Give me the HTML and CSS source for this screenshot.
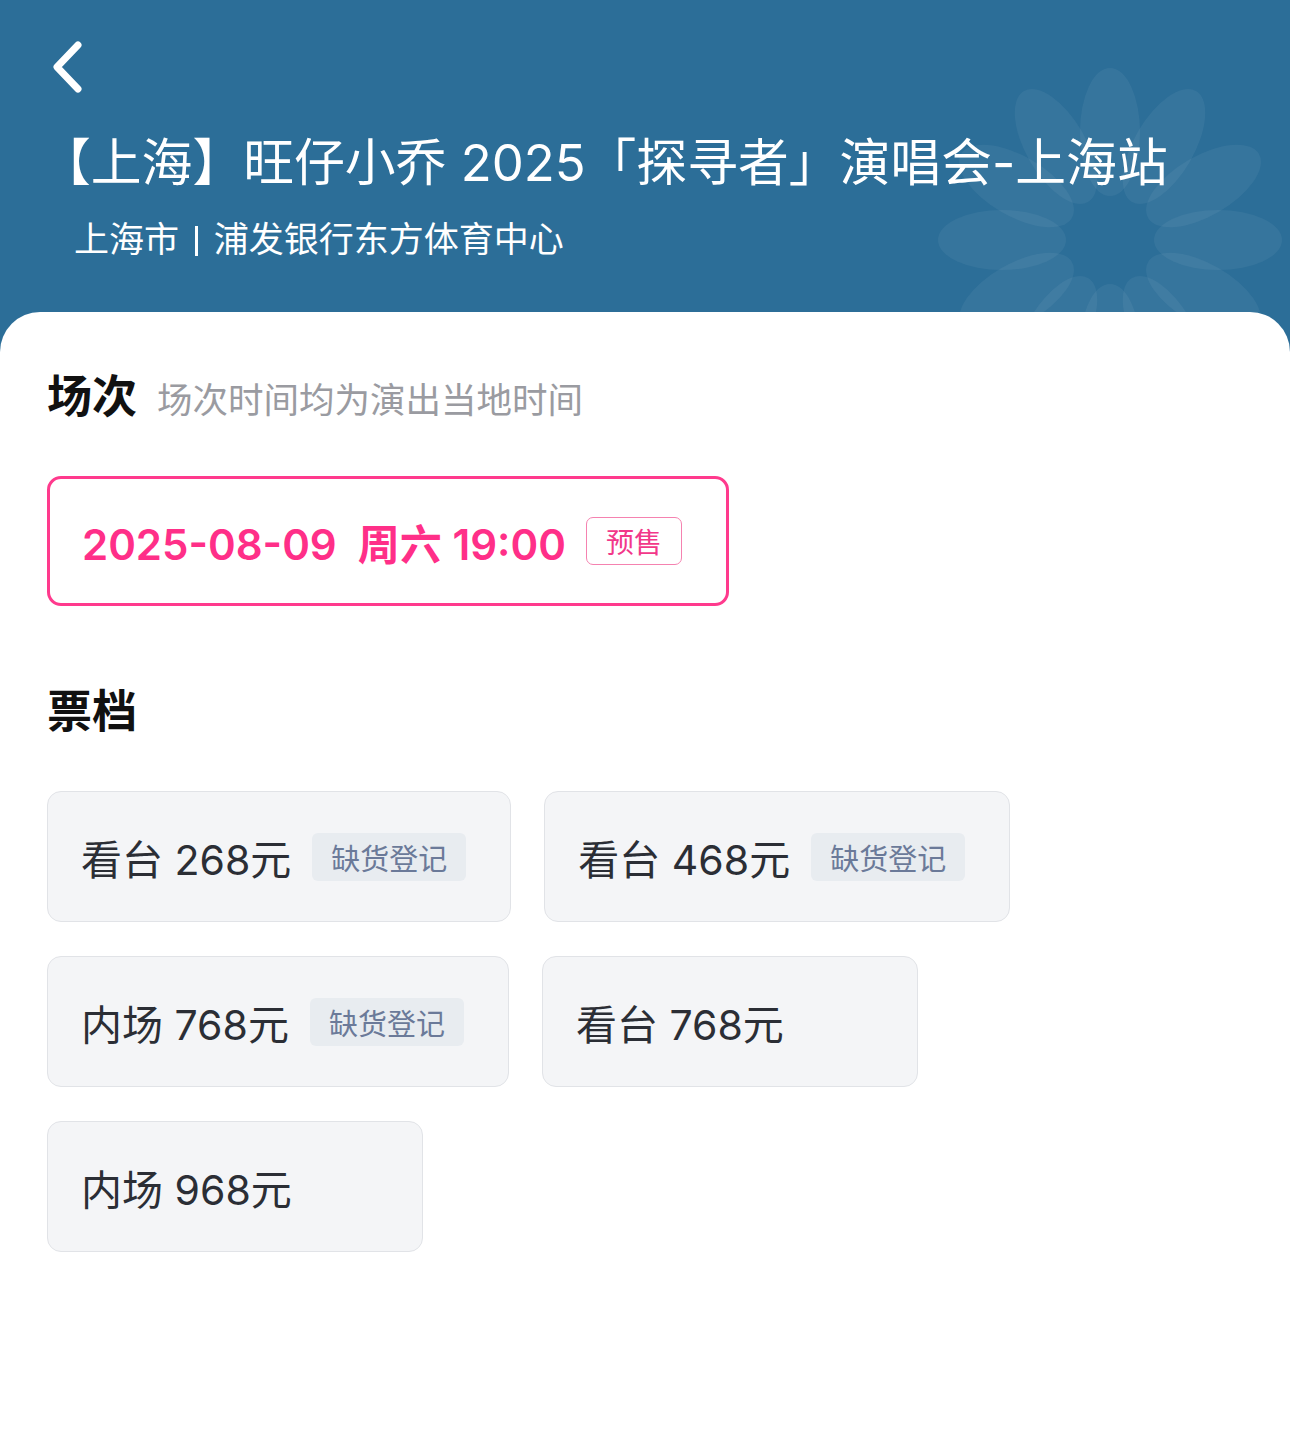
FILE: index.html
```html
<!DOCTYPE html>
<html lang="zh-CN">
<head>
<meta charset="utf-8">
<title>旺仔小乔 2025「探寻者」演唱会-上海站</title>
<link rel="stylesheet" href="styles.css">
</head>
<body>
<div class="page">
  <header class="hero">
    <svg class="watermark" width="360" height="360" viewBox="-180 -180 360 360" aria-hidden="true">
      <g fill="#ffffff" fill-opacity="0.05">
        <ellipse cx="0" cy="-108" rx="30" ry="64" transform="rotate(0)"/>
        <ellipse cx="0" cy="-108" rx="30" ry="64" transform="rotate(30)"/>
        <ellipse cx="0" cy="-108" rx="30" ry="64" transform="rotate(60)"/>
        <ellipse cx="0" cy="-108" rx="30" ry="64" transform="rotate(90)"/>
        <ellipse cx="0" cy="-108" rx="30" ry="64" transform="rotate(120)"/>
        <ellipse cx="0" cy="-108" rx="30" ry="64" transform="rotate(150)"/>
        <ellipse cx="0" cy="-108" rx="30" ry="64" transform="rotate(180)"/>
        <ellipse cx="0" cy="-108" rx="30" ry="64" transform="rotate(210)"/>
        <ellipse cx="0" cy="-108" rx="30" ry="64" transform="rotate(240)"/>
        <ellipse cx="0" cy="-108" rx="30" ry="64" transform="rotate(270)"/>
        <ellipse cx="0" cy="-108" rx="30" ry="64" transform="rotate(300)"/>
        <ellipse cx="0" cy="-108" rx="30" ry="64" transform="rotate(330)"/>
      </g>
    </svg>
    <svg class="back" width="36" height="58" viewBox="0 0 36 58" aria-label="返回">
      <path d="M28 7 L7 29 L28 51" fill="none" stroke="#ffffff" stroke-width="7" stroke-linecap="round" stroke-linejoin="round"/>
    </svg>
    <h1 class="title">【上海】旺仔小乔 2025「探寻者」演唱会-上海站</h1>
    <p class="venue">上海市 <span class="sep"></span> 浦发银行东方体育中心</p>
  </header>

  <main class="sheet">
    <section class="section">
      <div class="section-head">
        <h2 class="section-title">场次</h2>
        <span class="section-note">场次时间均为演出当地时间</span>
      </div>
      <div class="session">
        <span class="session-time">2025-08-09  周六 19:00</span>
        <span class="presale">预售</span>
      </div>
    </section>

    <section class="section section-tickets">
      <div class="section-head">
        <h2 class="section-title">票档</h2>
      </div>
      <div class="tickets">
        <div class="ticket"><span class="ticket-name">看台 268元</span><span class="ticket-tag">缺货登记</span></div>
        <div class="ticket"><span class="ticket-name">看台 468元</span><span class="ticket-tag">缺货登记</span></div>
        <div class="ticket"><span class="ticket-name">内场 768元</span><span class="ticket-tag">缺货登记</span></div>
        <div class="ticket"><span class="ticket-name">看台 768元</span></div>
        <div class="ticket"><span class="ticket-name">内场 968元</span></div>
      </div>
    </section>
  </main>
</div>
</body>
</html>
```

FILE: styles.css
```css
* { box-sizing: border-box; }

html, body {
  margin: 0;
  padding: 0;
  background: #ffffff;
}

body {
  font-family: Inter, "Noto Sans CJK SC", "Noto Sans", sans-serif;
  color: #1a1a1a;
}

.page {
  background: #2c6e98;
  min-height: 1448px;
  display: flex;
  flex-direction: column;
}

.hero {
  position: relative;
  height: 312px;
  overflow: hidden;
  padding-top: 38px;
  color: #ffffff;
}

.watermark {
  position: absolute;
  left: 930px;
  top: 60px;
}

.back {
  display: block;
  margin-left: 50px;
}

.title {
  position: relative;
  margin: 35px 0 0 40px;
  font-size: 50.8px;
  line-height: 64px;
  font-weight: 400;
  white-space: nowrap;
}

.venue {
  position: relative;
  margin: 21px 0 0 74px;
  font-size: 35px;
  line-height: 46px;
  font-weight: 400;
}

.sep {
  display: inline-block;
  width: 3px;
  height: 30px;
  margin: 0 6px;
  background: #ffffff;
  vertical-align: -4px;
}

.sheet {
  flex: 1;
  background: #ffffff;
  border-radius: 40px 40px 0 0;
  padding: 55px 47px 0;
}

.section-head {
  display: flex;
  align-items: baseline;
  gap: 20px;
}

.section-title {
  margin: 0;
  font-size: 45px;
  line-height: 60px;
  font-weight: 700;
  color: #111111;
}

.section-note {
  font-size: 35.5px;
  color: #9a9ba1;
}

.session {
  display: inline-flex;
  align-items: center;
  height: 130px;
  margin-top: 49px;
  padding: 0 44px 0 32px;
  border: 3px solid #ff3a8d;
  border-radius: 14px;
}

.session-time {
  white-space: pre;
  font-size: 42px;
  font-weight: 600;
  color: #ff2f88;
}

.presale {
  margin-left: 20px;
  width: 96px;
  height: 48px;
  display: flex;
  align-items: center;
  justify-content: center;
  border: 1.5px solid #f582b0;
  border-radius: 7px;
  font-size: 28px;
  color: #f2388a;
}

.section-tickets {
  margin-top: 76px;
}

.tickets {
  display: flex;
  flex-wrap: wrap;
  gap: 34px 33px;
  margin-top: 49px;
  max-width: 1000px;
}

.ticket {
  display: flex;
  align-items: center;
  height: 131px;
  min-width: 376px;
  padding: 0 44px 0 33px;
  background: #f4f5f7;
  border: 1px solid #e1e3e7;
  border-radius: 14px;
}

.ticket-name {
  font-size: 41px;
  color: #2b2e35;
  white-space: nowrap;
}

.ticket-tag {
  margin-left: 21px;
  height: 48px;
  padding: 0 19px;
  display: flex;
  align-items: center;
  background: #e8ecf0;
  border-radius: 6px;
  font-size: 29px;
  color: #6b7a99;
}
```
